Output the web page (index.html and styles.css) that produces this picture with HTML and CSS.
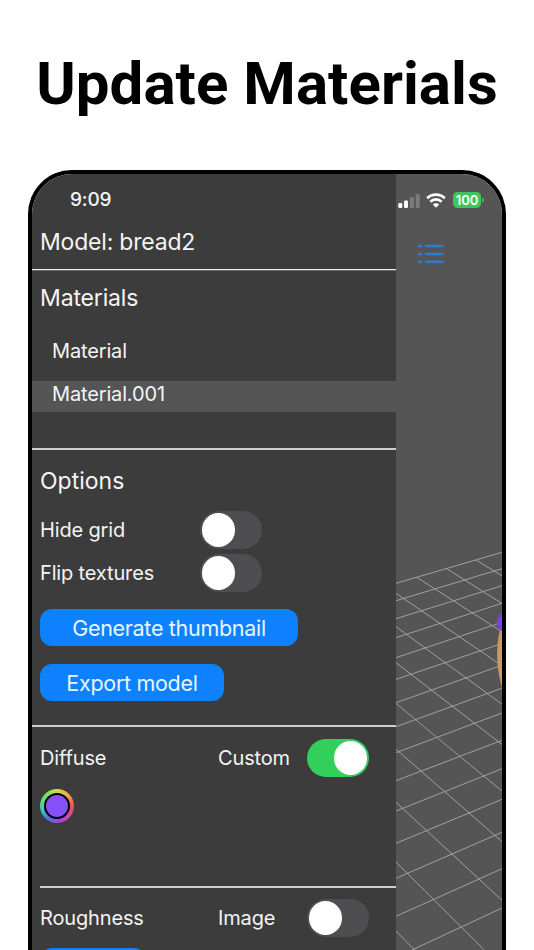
FILE: index.html
```html
<!DOCTYPE html>
<html lang="en">
<head>
    <meta charset="UTF-8">
    <meta name="viewport" content="width=device-width, initial-scale=1.0">
    <title>Update Materials</title>
    <link rel="stylesheet" href="styles.css">
</head>
<body>

    <h1 class="title">Update Materials</h1>

    <div class="phone">
        <div class="panel">
            <div class="time">9:09</div>
            <div class="model">Model: bread2</div>

            <div class="section materials">
                <h2>Materials</h2>
                <ul class="list">
                    <li>Material</li>
                    <li class="selected">Material.001</li>
                </ul>
            </div>

            <div class="section options">
                <h2>Options</h2>
                <div class="option">
                    <span>Hide grid</span>
                    <div class="toggle"></div>
                </div>
                <div class="option">
                    <span>Flip textures</span>
                    <div class="toggle"></div>
                </div>
                <div class="btn generate">Generate thumbnail</div>
                <div class="btn export">Export model</div>
            </div>

            <div class="section diffuse">
                <div class="channel">
                    <span>Diffuse</span>
                    <span>Custom</span>
                    <div class="toggle on"></div>
                </div>
                <div class="color-well"><div class="color"></div></div>
            </div>

            <div class="section roughness">
                <div class="channel">
                    <span>Roughness</span>
                    <span>Image</span>
                    <div class="toggle"></div>
                </div>
                <div class="btn load"></div>
            </div>
        </div>

        <div class="viewport">
            <div class="status">
                <svg class="signal" width="22" height="15" viewBox="0 0 22 15">
                    <rect x="0.3" y="10" width="4" height="5" rx="1.2" fill="#fff"/>
                    <rect x="6" y="7.5" width="4" height="7.5" rx="1.2" fill="#fff"/>
                    <rect x="11.9" y="4" width="4" height="11" rx="1.2" fill="#7c7c7c"/>
                    <rect x="17.7" y="1" width="4" height="14" rx="1.2" fill="#7c7c7c"/>
                </svg>
                <svg class="wifi" width="20" height="15" viewBox="0 0 20 15">
                    <path d="M1.2 5.2a12.5 12.5 0 0 1 17.6 0M4.4 8.7a8 8 0 0 1 11.2 0" fill="none" stroke="#fff" stroke-width="2.7"/>
                    <path d="M10 14.8l-3.2-3.2a4.5 4.5 0 0 1 6.4 0z" fill="#fff"/>
                </svg>
                <div class="battery">100</div>
                <div class="battery-tip"></div>
            </div>
            <svg class="menu" width="28" height="20" viewBox="0 0 28 20" stroke="#2c7cd2" stroke-width="2.4" stroke-linecap="round">
                <path d="M2 2h2M9.2 2h16.6M2 10h2M9.2 10h16.6M2 17.8h2M9.2 17.8h16.6"/>
            </svg>
            <svg class="scene" width="106" height="410" viewBox="396 540 106 410">
                <g stroke="#a9a9a9" stroke-width="0.9">
                    <path d="M396 583.3L502 552.3M396 600.7L502 568.7M396 618.7L502 585.7M396 637.7L502 603.3M396 657.7L502 622.3M396 679.3L502 643.5M396 702.7L502 665.2M396 726.7L502 688.2M396 752.7L502 713M396 780.7L502 740.3M396 811L502 768.7M396 843.3L502 799.3M396 878.3L502 832.3M396 916.3L502 868.7M412 950L502 908"/>
                    <path d="M476 560L502 575.8M446.7 568.7L502 603.5M416.7 577.3L502 631.8M396 593.3L502 665.8M396 626.7L502 704.2M396 662.7L502 744.5M396 703.3L440 740L502 791M396 749.3L502 841.6M396 802.3L502 900.3M396 862L484.3 950M396 931L414.5 950"/>
                </g>
                <path d="M502 629L499.8 630Q493.5 658 502 688z" fill="#c79a5e"/>
                <path d="M502 612Q493 622 499.5 630L502 631z" fill="#7445d8"/>
            </svg>
        </div>
    </div>

</body>
</html>
```

FILE: styles.css
```css
*{
    margin: 0;
    padding: 0;
    box-sizing: border-box;
}
body{
    height: 950px;
    background-color: #fff;
    overflow: hidden;
    font-family: Inter, "Liberation Sans", sans-serif;
}
.title{
    height: 170px;
    padding-top: 49px;
    text-align: center;
    font: bold 60px/70px Roboto, sans-serif;
    letter-spacing: 0.05px;
    color: #000;
}
.phone{
    display: grid;
    grid-template-columns: 364px 1fr;
    width: 478px;
    height: 780px;
    margin-left: 28px;
    border: 4px solid #000;
    border-bottom: none;
    border-radius: 44px 44px 0 0;
    overflow: hidden;
}
.panel{
    height: 776px;
    overflow: hidden;
    background-color: #3c3c3c;
    color: #f4f4f4;
    font-size: 20px;
    letter-spacing: -0.15px;
}
.time{
    height: 52px;
    padding-left: 38px;
    line-height: 52px;
    font-size: 19px;
    font-weight: 500;
}
.model{
    height: 43px;
    padding-left: 8px;
    line-height: 33px;
    font-size: 23px;
    letter-spacing: -0.2px;
}
.section{
    border-top: 2px solid #cfcfcf;
    padding-left: 8px;
}
h2{
    font-size: 23px;
    font-weight: 400;
}
.materials{
    height: 179px;
    padding-left: 0;
    border-top: 1px solid #ededed;
    box-shadow: inset 0 1px #6b6b6b;
}
.materials h2{
    padding-left: 8px;
    line-height: 56px;
}
.list{
    display: flex;
    flex-direction: column;
    gap: 12px;
    margin-top: 12px;
    list-style: none;
}
.list li{
    height: 31px;
    padding-left: 20px;
    line-height: 27px;
}
.list .selected{
    background-color: #555;
}
.options{
    height: 277px;
}
.options h2{
    line-height: 62px;
    letter-spacing: 0;
}
.option{
    display: grid;
    grid-template-columns: 160px 62px;
    align-items: center;
    height: 38px;
    margin-bottom: 5px;
}
.option:nth-child(2){
    margin-top: -1px;
}
/* switches */
.toggle{
    width: 62px;
    height: 38px;
    padding: 2px 1.7px;
    border-radius: 19px;
    background-color: #4e4e50;
}
.toggle::after{
    content: "";
    display: block;
    width: 33.6px;
    height: 34px;
    border-radius: 50%;
    background-color: #fff;
}
.toggle.on{
    background-color: #32cf5b;
}
.toggle.on::after{
    margin-left: auto;
}
.btn{
    height: 37px;
    border-radius: 12px;
    background-color: #0e82fe;
    color: #e9f5ff;
    font-size: 21.5px;
    line-height: 38px;
    text-align: center;
    letter-spacing: -0.3px;
}
.generate{
    width: 258px;
    margin-top: 17px;
}
.export{
    width: 184px;
    margin-top: 18px;
}
.diffuse{
    height: 161px;
    padding-top: 12px;
}
.channel{
    display: grid;
    grid-template-columns: 178px 89px 62px;
    align-items: center;
    height: 38px;
}
.color-well{
    width: 34px;
    height: 34px;
    margin-top: 12px;
    padding: 4px;
    border-radius: 50%;
    background: conic-gradient(#d2d94e, #eda94c 45deg, #ea5350 90deg, #dc48a0 125deg, #9a45dd 170deg, #4c7ae0 220deg, #43d5b0 265deg, #6fe05c 310deg, #d2d94e);
}
.color{
    height: 26px;
    border: 2px solid #000;
    border-radius: 50%;
    background-color: #8750fb;
}
/* the divider is inset here */
.roughness{
    margin-left: 8px;
    padding: 11px 0 0;
}
.load{
    width: 106px;
    margin-top: 11px;
}
.viewport{
    display: flex;
    flex-direction: column;
    background-color: #555;
}
.status{
    display: flex;
    align-items: center;
    height: 52px;
    padding-left: 2px;
}
.wifi{
    margin-left: 6px;
}
.battery{
    width: 28px;
    height: 16px;
    margin-left: 7px;
    border-radius: 4.5px;
    background-color: #3cc65c;
    color: #fff;
    font-size: 13px;
    font-weight: 600;
    line-height: 16px;
    text-align: center;
}
.battery-tip{
    width: 1.5px;
    height: 4px;
    margin-left: 1px;
    border-radius: 0 2px 2px 0;
    background-color: #3cc65c;
}
.menu{
    margin: 18px 0 0 21px;
}
.scene{
    margin-top: 276px;
}
```
